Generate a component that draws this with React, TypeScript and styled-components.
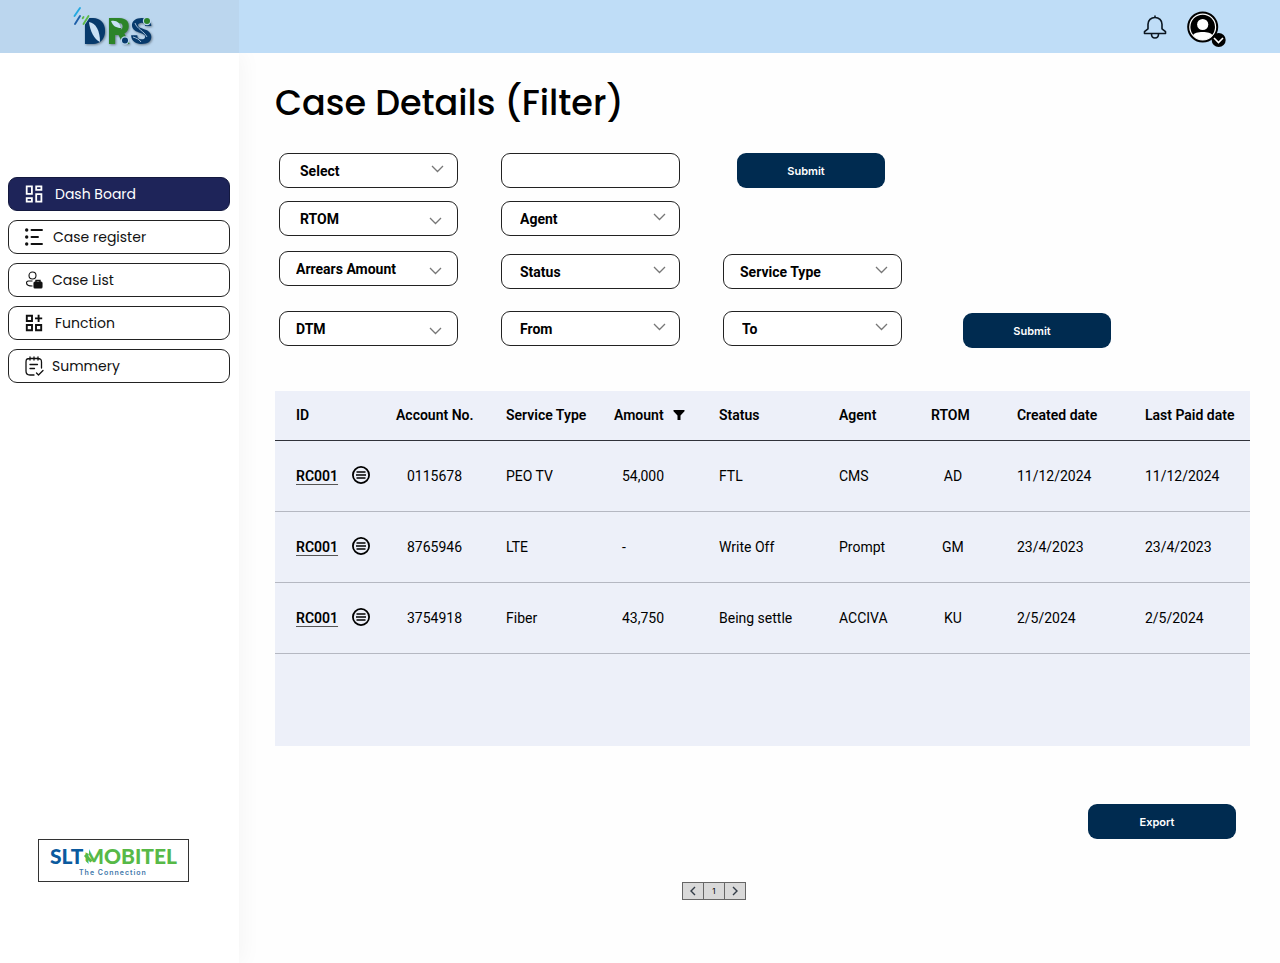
import React from "react";
import styled, { createGlobalStyle } from "styled-components";

const GlobalStyle = createGlobalStyle`
  *, *::before, *::after { box-sizing: border-box; }
  body { margin: 0; background: #fefefe; color: #000; font-family: Roboto, "Liberation Sans", sans-serif; }
  button, input, select { font: inherit; color: inherit; }
`;

const Page = styled.div`
  min-height: 100vh;
  display: flex;
  flex-direction: column;
`;

const TopBar = styled.header`
  position: relative;
  z-index: 1;
  display: flex;
  height: 53px;
  background: #bfddf7;
`;

const Brand = styled.a`
  width: 239px;
  padding-left: 70px;
  background: #bbd6ee;
`;

const BrandMark = styled.svg`
  display: block;
  overflow: visible;
`;

const Letters = styled.g`
  filter: drop-shadow(1px 1px 1px rgba(60, 70, 80, 0.6));
`;

const Account = styled.div`
  flex: 1;
  display: flex;
  justify-content: flex-end;
  align-items: center;
  gap: 20px;
  padding-right: 51px;
`;

const IconButton = styled.button`
  display: flex;
  padding: 0;
  border: 0;
  background: none;
  cursor: pointer;
`;

const Body = styled.div`
  flex: 1;
  display: flex;
`;

const Sidebar = styled.aside`
  width: 239px;
  flex: none;
  display: flex;
  flex-direction: column;
  justify-content: space-between;
  padding: 124px 9px 81px 8px;
  background: #fff;
  box-shadow: 4px 0 20px rgba(0, 0, 0, 0.04);
`;

const Nav = styled.nav`
  display: flex;
  flex-direction: column;
  gap: 9px;
`;

const NavLink = styled.a<{ $active?: boolean; $gap: number }>`
  display: flex;
  align-items: center;
  gap: ${(p) => p.$gap}px;
  height: 34px;
  padding-left: 15px;
  border: 1px solid ${(p) => (p.$active ? "#14193f" : "#222")};
  border-radius: 9px;
  background: ${(p) => (p.$active ? "#1e2459" : "#fff")};
  color: ${(p) => (p.$active ? "#fff" : "#111")};
  font: 400 14px/20px Poppins, Inter, sans-serif;
  text-decoration: none;
`;

const Partner = styled.a`
  display: block;
  width: 151px;
  height: 43px;
  margin-left: 30px;
  border: 1px solid #333;
  background: #fff;
`;

const Main = styled.main`
  flex: 1;
  min-width: 0;
  padding: 22px 30px 40px 36px;
`;

const Title = styled.h1`
  margin: 0;
  font: 500 35px/56px Poppins, Inter, sans-serif;
`;

const Filters = styled.form`
  padding: 22px 0 0 4px;
`;

const FilterRow = styled.div<{ $top: number }>`
  display: grid;
  grid-template-columns: repeat(3, minmax(0, 179px)) 148px;
  column-gap: 43px;
  align-items: end;
  margin-top: ${(p) => p.$top}px;
`;

const Field = styled.div<{ $raise: number }>`
  display: grid;
  height: 35px;
  margin-bottom: ${(p) => p.$raise}px;

  > * { grid-area: 1 / 1; }
`;

const Select = styled.select<{ $inset: number }>`
  appearance: none;
  width: 100%;
  padding: 0 36px 0 ${(p) => p.$inset}px;
  border: 1px solid #222;
  border-radius: 9px;
  background: #fff;
  font-size: 14px;
  font-weight: 700;
`;

const Chevron = styled.svg<{ $low?: boolean }>`
  justify-self: end;
  margin: ${(p) => (p.$low ? "16px 16px 0 0" : "12px 14px 0 0")};
  pointer-events: none;
`;

const TextBox = styled.input`
  width: 100%;
  height: 35px;
  padding: 0 16px;
  border: 1px solid #222;
  border-radius: 9px;
  background: #fff;
  font-size: 14px;
`;

const Button = styled.button`
  width: 148px;
  height: 35px;
  padding: 0 10px 0 0;
  border: 0;
  border-radius: 9px;
  background: #002b50;
  color: #fff;
  font: 600 11px/16px Inter, sans-serif;
  cursor: pointer;
`;

const InsetCell = styled.div`
  padding-left: 14px;
`;

const LastCell = styled.div`
  grid-column: 4;
  padding-left: 18px;
`;

const TableCard = styled.section`
  min-height: 355px;
  margin-top: 43px;
  background: #edf0f9;
`;

const Table = styled.table`
  width: 100%;
  table-layout: fixed;
  border-collapse: collapse;
  font-size: 14px;
  line-height: 20px;
`;

const HeadRow = styled.tr`
  height: 49px;
  border-bottom: 1px solid #30323a;
`;

const Row = styled.tr`
  height: 71px;
  border-bottom: 1px solid #b5b8c2;
`;

type CellProps = { $inset?: number };

const Th = styled.th<CellProps>`
  padding: 0 0 0 ${(p) => p.$inset ?? 0}px;
  font-weight: 600;
  text-align: left;
  white-space: nowrap;
`;

const Td = styled.td<CellProps>`
  padding: 0 0 0 ${(p) => p.$inset ?? 0}px;
  white-space: nowrap;
`;

const CenteredTd = styled.td`
  padding: 0 42px 0 0;
  text-align: center;
`;

const InlineGroup = styled.div<{ $gap: number }>`
  display: flex;
  align-items: center;
  gap: ${(p) => p.$gap}px;
`;

const CaseLink = styled.a`
  color: inherit;
  font-weight: 600;
  text-decoration: underline 1px #555;
  text-underline-offset: 3px;
`;

const Actions = styled.div`
  display: flex;
  justify-content: flex-end;
  padding: 58px 14px 0 0;
`;

const Pager = styled.nav`
  display: flex;
  justify-content: center;
  margin-top: 43px;
  padding-right: 97px;
`;

const PagerButton = styled.button`
  display: flex;
  align-items: center;
  justify-content: center;
  width: 22px;
  height: 18px;
  padding: 0;
  border: 1px solid #666;
  background: #d9d9d9;
  font: 400 8px/10px Inter, sans-serif;

  & + & { margin-left: -1px; }
`;

const DrsLogo = () => (
  <BrandMark width="88" height="53" viewBox="70 0 88 53" role="img" aria-label="DRS">
    <Letters fontFamily="Roboto, sans-serif" fontWeight="900" fontSize="36">
      <text x="83" y="44" fill="#073a6c">D</text>
      <text x="107" y="44" fill="#2c8429">R</text>
      <text x="130" y="44" fill="#073a6c">S</text>
      <path d="M90 23h6q5 3 5 10t-5 8h-6z" fill="#073a6c" />
      <path d="M113 23h5q3 2 3 5t-3 3h-5z" fill="#2c8429" />
    </Letters>
    <path d="M84 17h6l-6 9z" fill="#bbd6ee" />
    <path d="M89 22c7 1 11 9 11 20c-6-3-10-11-11-20z" fill="#c9e0f4" />
    <path d="M111 21c6-1 9 2 10 7c-5 0-8-2-10-7z" fill="#c9e0f4" />
    <path d="M135 23c2 6 9 8 12 14M133 37c3 1 6 2 8 5" fill="none" stroke="#c9e0f4" strokeWidth=".8" />
    <circle cx="125" cy="40.500" r="4.200" fill="#bbd6ee" />
    <circle cx="125" cy="40.500" r="3" fill="#073a6c" />
    <circle cx="147" cy="21" r="4.200" fill="#bbd6ee" />
    <circle cx="147" cy="21" r="3" fill="#2c8429" />
    <g strokeWidth="1.900" strokeLinecap="round">
      <path d="M80 8l-5.500 8" stroke="#23a9e1" />
      <path d="M80 16l-5 8" stroke="#1d5fa8" />
      <path d="M83.500 17l-.8 1.200M88.500 16l-5 8" stroke="#5cb947" />
    </g>
  </BrandMark>
);

const PartnerLogo = () => (
  <svg width="149" height="41" viewBox="39 840 149 41" role="img" aria-label="SLT Mobitel, The Connection">
    <g fontFamily="Lato, sans-serif" fontWeight="900" fontSize="21">
      <text x="50" y="864" fill="#0b5a9e">SLT</text>
      <text x="84" y="864" fill="#57b947">MOBITEL</text>
    </g>
    <path d="M83.800 848h5.200v6l-3.200-1.500h-2zM83.800 859.500l5 4.500v1h-5z" fill="#fff" />
    <path d="M85 855l6.500 6.500" fill="none" stroke="#57b947" strokeWidth="3" />
    <text x="79" y="875" fill="#3f78ab" fontFamily="Inter, sans-serif" fontWeight="600" fontSize="7" letterSpacing="1">The Connection</text>
  </svg>
);

const BellIcon = () => (
  <svg width="24" height="26" viewBox="0 0 24 26" fill="none" stroke="#0b1620" strokeWidth="1.600" strokeLinejoin="round">
    <path d="M12 1.500v2M1.500 19.500v-1.800L5 14.800v-4.500c0-4 3-6.800 7-6.800s7 2.800 7 6.800v4.500l3.500 2.900v1.800z" />
    <path d="M8.500 20c0 2.700 1.500 4 3.500 4s3.500-1.300 3.500-4" />
  </svg>
);

const AvatarIcon = () => (
  <svg width="42" height="41" viewBox="1187 6 42 41">
    <circle cx="1202.700" cy="27" r="15.500" fill="#000" />
    <circle cx="1202.700" cy="27" r="12.900" fill="none" stroke="#fff" strokeWidth="1.200" />
    <circle cx="1202.700" cy="24.500" r="5.600" fill="#fff" />
    <path d="M1193 35.300c1-2.300 5-3.300 9.700-3.300s8.700 1 9.700 3.300c-2.500 3-6.200 4.700-9.700 4.700s-7.200-1.700-9.700-4.700z" fill="#fff" />
    <circle cx="1218.700" cy="40" r="7" fill="#000" />
    <path d="M1214 38l4.500 4.500 4.500-4.500" fill="none" stroke="#fff" strokeWidth="1.600" />
  </svg>
);

const navIcons = {
  dashboard: (
    <svg width="20" height="20" viewBox="0 0 20 20" fill="none" stroke="currentColor" strokeWidth="1.800">
      <path d="M2.700 2.300h5.200v7.500H2.700zM12.200 2.300h5.200v3.600h-5.200zM2.700 14.200h5.200v3.400H2.700zM12.200 10.200h5.200v7.400h-5.200z" />
    </svg>
  ),
  register: (
    <svg width="20" height="20" viewBox="0 0 20 20" fill="none" stroke="currentColor" strokeWidth="1.900" strokeLinecap="round">
      <path d="M7.500 3H18M7.500 10H14M7.500 17H18" />
      <g fill="currentColor" stroke="none">
        <circle cx="2.700" cy="3" r="1.700" />
        <circle cx="2.700" cy="10" r="1.700" />
        <circle cx="2.700" cy="17" r="1.700" />
      </g>
    </svg>
  ),
  list: (
    <svg width="20" height="20" viewBox="0 0 20 20" fill="none" stroke="currentColor" strokeWidth="1.100">
      <circle cx="8.500" cy="5.500" r="3.500" />
      <path d="M8.500 11H4.500c-2.800 0-2.500 3.500 0 4.500 1 .5 2.500.5 4 .5" />
      <rect x="10" y="12" width="8" height="6" rx="1" fill="currentColor" />
      <path d="M12 12v-1.500h4V12" strokeWidth="1.400" />
    </svg>
  ),
  function: (
    <svg width="20" height="20" viewBox="0 0 20 20" fill="none" stroke="currentColor" strokeWidth="1.900">
      <path d="M2.800 2.800h5.200v5.200H2.800zM2.800 12h5.200v5.200H2.800zM12 12h5.200v5.200H12zM14.600 1.800v7.200M11 5.400h7.200" />
    </svg>
  ),
  summary: (
    <svg width="20" height="20" viewBox="0 0 20 20" fill="none" stroke="currentColor" strokeWidth="1.300" strokeLinecap="round" strokeLinejoin="round">
      <path d="M10 19H6c-3 0-4-1-4-4V6c0-3 1-3.500 4-3.500h7.500c3 0 4 .5 4 3.500v6M6 1v3M10 1v3M14 1v3M6 8.500h7.500M6 12.500h4.500M12.500 17l2 2 4.500-4.500" />
    </svg>
  ),
};

const FilterIcon = () => (
  <svg width="12" height="12" viewBox="0 0 12 12" aria-hidden="true">
    <path d="M.5 1h11v1.200L7.500 6.500V11h-3V6.500L.5 2.200z" />
  </svg>
);

const DetailIcon = () => (
  <svg width="20" height="20" viewBox="0 0 20 20" fill="none" stroke="#000" strokeWidth="1.800">
    <circle cx="10" cy="9" r="8.100" />
    <path d="M5.500 6h9M5 9h10M5.500 12h9" strokeWidth="1.600" />
  </svg>
);

const navItems = [
  { label: "Dash Board", icon: navIcons.dashboard, gap: 11, active: true },
  { label: "Case register", icon: navIcons.register, gap: 9 },
  { label: "Case List", icon: navIcons.list, gap: 8 },
  { label: "Function", icon: navIcons.function, gap: 11 },
  { label: "Summery", icon: navIcons.summary, gap: 8 },
];

const cases = [
  { account: "0115678", service: "PEO TV", amount: "54,000", status: "FTL", agent: "CMS", rtom: "AD", date: "11/12/2024" },
  { account: "8765946", service: "LTE", amount: "-", status: "Write Off", agent: "Prompt", rtom: "GM", date: "23/4/2023" },
  { account: "3754918", service: "Fiber", amount: "43,750", status: "Being settle", agent: "ACCIVA", rtom: "KU", date: "2/5/2024" },
];

const columnShares = [112, 119, 108, 105, 120, 92, 86, 128, 105];

type DropdownProps = { label: string; inset?: number; low?: boolean; raise?: number };

const Dropdown = ({ label, inset = 20, low, raise = 0 }: DropdownProps) => (
  <Field $raise={raise}>
    <Select $inset={inset} aria-label={label}>
      <option>{label}</option>
    </Select>
    <Chevron $low={low} width="13" height="8" viewBox="0 0 13 8" fill="none" stroke="#777" strokeWidth="1.300" aria-hidden="true">
      <path d="M1 1l5.500 5.500L12 1" />
    </Chevron>
  </Field>
);

export default function App() {
  return (
    <Page>
      <GlobalStyle />
      <TopBar>
        <Brand href="#"><DrsLogo /></Brand>
        <Account>
          <IconButton aria-label="Notifications"><BellIcon /></IconButton>
          <IconButton aria-label="Account"><AvatarIcon /></IconButton>
        </Account>
      </TopBar>
      <Body>
        <Sidebar>
          <Nav>
            {navItems.map((item) => (
              <NavLink key={item.label} href="#" $active={item.active} $gap={item.gap}>
                {item.icon}
                {item.label}
              </NavLink>
            ))}
          </Nav>
          <Partner href="#"><PartnerLogo /></Partner>
        </Sidebar>
        <Main>
          <Title>Case Details (Filter)</Title>
          <Filters onSubmit={(e) => e.preventDefault()}>
            <FilterRow $top={0}>
              <Dropdown label="Select" />
              <TextBox aria-label="Search value" />
              <InsetCell><Button>Submit</Button></InsetCell>
            </FilterRow>
            <FilterRow $top={13}>
              <Dropdown label="RTOM" low />
              <Dropdown label="Agent" inset={18} />
            </FilterRow>
            <FilterRow $top={15}>
              <Dropdown label="Arrears Amount" inset={16} low raise={3} />
              <Dropdown label="Status" inset={18} />
              <Dropdown label="Service Type" inset={16} />
            </FilterRow>
            <FilterRow $top={22}>
              <Dropdown label="DTM" inset={16} low raise={2} />
              <Dropdown label="From" inset={18} raise={2} />
              <Dropdown label="To" inset={18} raise={2} />
              <LastCell><Button>Submit</Button></LastCell>
            </FilterRow>
          </Filters>
          <TableCard>
            <Table>
              <colgroup>
                {columnShares.map((share, i) => (
                  <col key={i} width={`${(share / 975) * 100}%`} />
                ))}
              </colgroup>
              <thead>
                <HeadRow>
                  <Th $inset={21}>ID</Th>
                  <Th $inset={9}>Account No.</Th>
                  <Th>Service Type</Th>
                  <Th>
                    <InlineGroup $gap={9}>Amount <FilterIcon /></InlineGroup>
                  </Th>
                  <Th>Status</Th>
                  <Th>Agent</Th>
                  <Th>RTOM</Th>
                  <Th>Created date</Th>
                  <Th>Last Paid date</Th>
                </HeadRow>
              </thead>
              <tbody>
                {cases.map((c) => (
                  <Row key={c.account}>
                    <Td $inset={21}>
                      <InlineGroup $gap={13}>
                        <CaseLink href="#">RC001</CaseLink>
                        <IconButton aria-label={`Details of ${c.account}`}><DetailIcon /></IconButton>
                      </InlineGroup>
                    </Td>
                    <Td $inset={20}>{c.account}</Td>
                    <Td>{c.service}</Td>
                    <Td $inset={8}>{c.amount}</Td>
                    <Td>{c.status}</Td>
                    <Td>{c.agent}</Td>
                    <CenteredTd>{c.rtom}</CenteredTd>
                    <Td>{c.date}</Td>
                    <Td>{c.date}</Td>
                  </Row>
                ))}
              </tbody>
            </Table>
          </TableCard>
          <Actions><Button>Export</Button></Actions>
          <Pager aria-label="Pages">
            <PagerButton aria-label="Previous page">
              <svg width="8" height="10" viewBox="0 0 8 10" fill="none" stroke="#333d48" strokeWidth="1.400"><path d="M6 1L2 5l4 4" /></svg>
            </PagerButton>
            <PagerButton>1</PagerButton>
            <PagerButton aria-label="Next page">
              <svg width="8" height="10" viewBox="0 0 8 10" fill="none" stroke="#333d48" strokeWidth="1.400"><path d="M2 1l4 4-4 4" /></svg>
            </PagerButton>
          </Pager>
        </Main>
      </Body>
    </Page>
  );
}
